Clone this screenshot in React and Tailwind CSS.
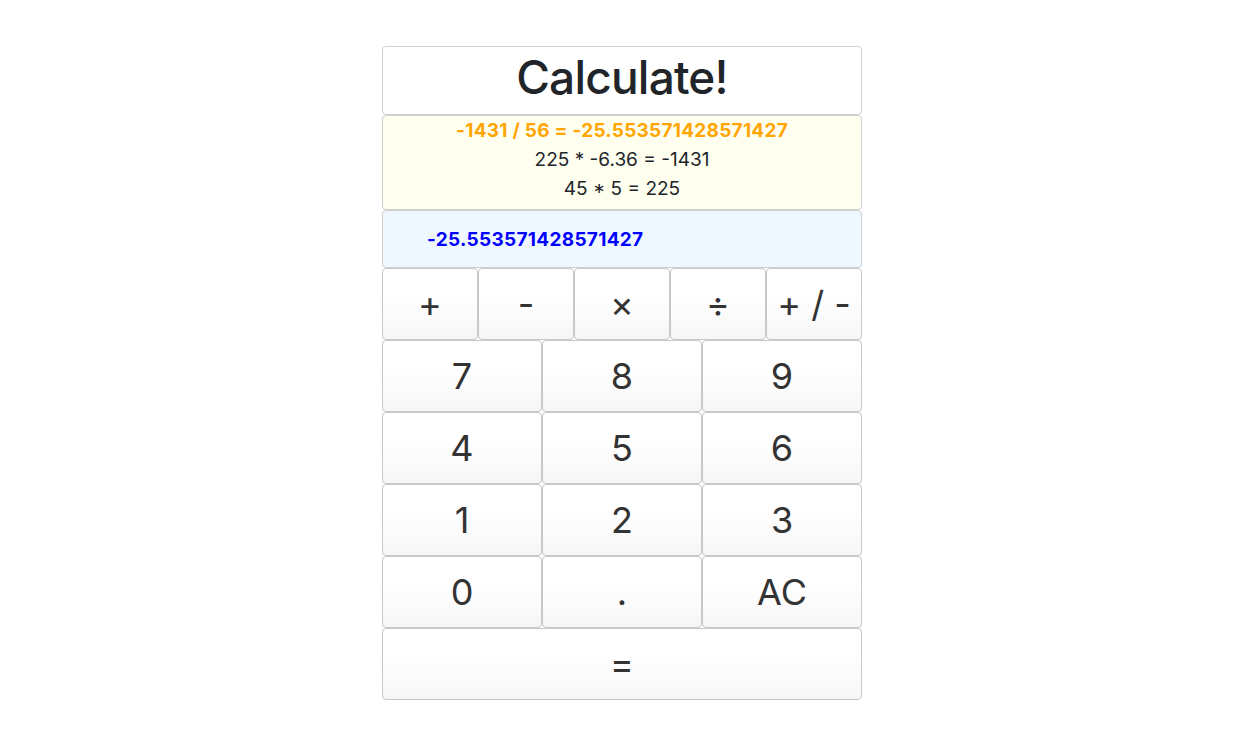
import React from 'react';

const ops = ['+', '-', '×', '÷', '+ / -'];
const digits = ['7', '8', '9', '4', '5', '6', '1', '2', '3', '0', '.', 'AC'];

const btn =
  'flex items-center justify-center h-[72px] border border-[#c8c8c8] rounded-[4px] bg-gradient-to-b from-white from-40% to-[#f6f6f6] text-[36px] text-[#333]';

export default function App() {
  return (
    <div className="min-h-screen bg-white font-['Inter',sans-serif]">
      <div className="w-[480px] mx-auto pt-[46px]">
        <div className="h-[69px] border border-[#d0d0d0] rounded-[4px] flex items-center justify-center pb-[7px]">
          <h1 className="text-[46px] font-medium text-[#212529] leading-none tracking-[-0.8px]">Calculate!</h1>
        </div>
        <div className="h-[95px] border border-[#d0d0d0] rounded-[4px] bg-[#fffff0] flex flex-col items-center text-[19px] leading-[29px] text-[#212529]">
          <div className="font-bold text-[#ffa500] tracking-[0.25px]">-1431 / 56 = -25.553571428571427</div>
          <div>225 * -6.36 = -1431</div>
          <div>45 * 5 = 225</div>
        </div>
        <div className="h-[58px] border border-[#d0d0d0] rounded-[4px] bg-[#f0f8ff] flex items-center pl-[44px] pt-[2px]">
          <span className="text-[19px] font-bold text-[#0000ff] tracking-[0.3px]">-25.553571428571427</span>
        </div>
        <div className="grid grid-cols-5">
          {ops.map((o) => (
            <button key={o} className={btn}>{o}</button>
          ))}
        </div>
        <div className="grid grid-cols-3">
          {digits.map((d) => (
            <button key={d} className={btn}>{d}</button>
          ))}
        </div>
        <button className={btn + ' w-full'}>=</button>
      </div>
    </div>
  );
}
